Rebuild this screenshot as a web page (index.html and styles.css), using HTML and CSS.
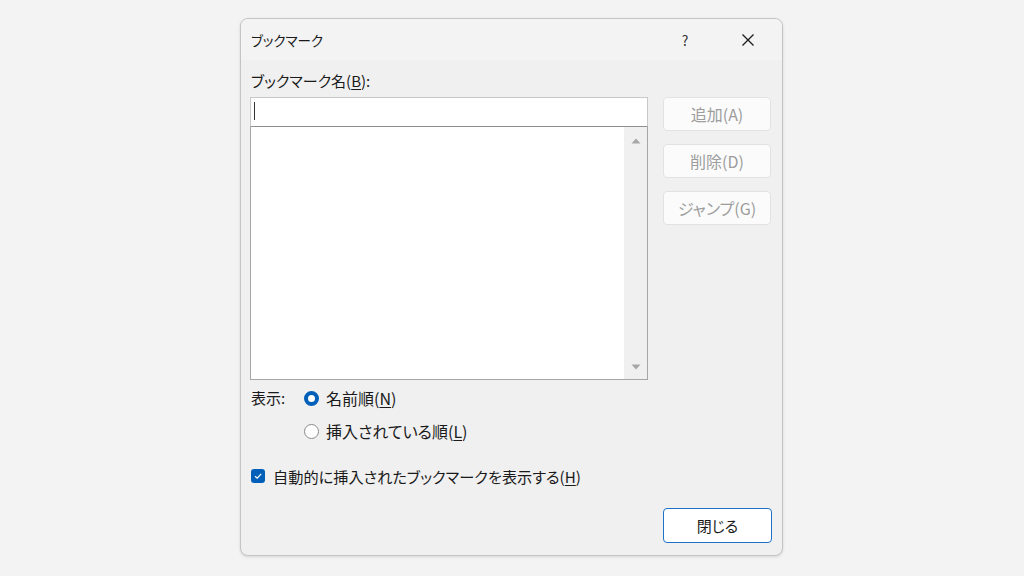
FILE: index.html
```html
<!DOCTYPE html>
<html lang="ja">
<head>
<meta charset="utf-8">
<link rel="stylesheet" href="styles.css">
</head>
<body>
<div class="stage">
  <div class="dialog">
    <div class="titlebar">
      <span class="title">ブックマーク</span>
      <span class="help">?</span>
      <span class="close">
        <svg width="14" height="14" viewBox="0 0 14 14"><path d="M1.5 1.5 L12.5 12.5 M12.5 1.5 L1.5 12.5" stroke="#1a1a1a" stroke-width="1.3" fill="none"/></svg>
      </span>
    </div>
    <div class="body">
      <div class="label">ブックマーク名(<u>B</u>):</div>
      <div class="main">
        <div class="leftcol">
          <div class="input"><span class="caret"></span></div>
          <div class="list">
            <div class="listarea"></div>
            <div class="scroll">
              <svg width="10" height="6" viewBox="0 0 10 6"><path d="M0.5 5.5 L5 0.5 L9.5 5.5 Z" fill="#a7a7a7"/></svg>
              <svg width="10" height="6" viewBox="0 0 10 6"><path d="M0.5 0.5 L5 5.5 L9.5 0.5 Z" fill="#a7a7a7"/></svg>
            </div>
          </div>
        </div>
        <div class="rightcol">
          <div class="btn disabled">追加(A)</div>
          <div class="btn disabled">削除(D)</div>
          <div class="btn disabled">ジャンプ(G)</div>
        </div>
      </div>
      <div class="display">
        <div class="displabel">表示:</div>
        <div class="radios">
          <div class="radio-row"><span class="radio checked"></span><span>名前順(<u>N</u>)</span></div>
          <div class="radio-row"><span class="radio"></span><span>挿入されている順(<u>L</u>)</span></div>
        </div>
      </div>
      <div class="check-row">
        <span class="checkbox"><svg width="10" height="10" viewBox="0 0 10 10"><path d="M2 5.2 L4.2 7.2 L8.2 2.8" stroke="#fff" stroke-width="1.2" fill="none"/></svg></span>
        <span>自動的に挿入されたブックマークを表示する(<u>H</u>)</span>
      </div>
      <div class="footer">
        <div class="btn primary">閉じる</div>
      </div>
    </div>
  </div>
</div>
</body>
</html>
```

FILE: styles.css
```css
* { box-sizing: border-box; }
html, body { margin: 0; padding: 0; }
body {
  background: #f3f3f3;
  font-family: "Noto Sans CJK JP", "Noto Sans", sans-serif;
  font-feature-settings: "palt";
  color: #1a1a1a;
  font-size: 15px;
}
.stage {
  width: 1024px;
  height: 576px;
  display: flex;
  align-items: flex-start;
  justify-content: flex-start;
  padding: 18px 0 0 240px;
}
.dialog {
  width: 543px;
  height: 538px;
  background: #f0f0f0;
  border: 1px solid #c4c4c4;
  border-radius: 8px;
  box-shadow: 0 1px 3px rgba(0,0,0,0.12);
  overflow: hidden;
  display: flex;
  flex-direction: column;
}
.titlebar {
  height: 41px;
  background: #f3f3f3;
  display: flex;
  align-items: center;
  padding-left: 10px;
  font-size: 13.5px;
}
.title { flex: 1; }
.help { width: 20px; text-align: center; margin-right: 46px; font-size: 14px; color: #333; }
.close { width: 14px; height: 14px; display: flex; margin-right: 27px; }
.body {
  flex: 1;
  padding: 0 10px 0 9px;
  display: flex;
  flex-direction: column;
}
.label { margin-top: 11px; line-height: 20px; height: 20px; padding-left: 1px; }
u { text-underline-offset: 2px; text-decoration-thickness: 1px; }
.main { display: flex; margin-top: 6px; gap: 14px; }
.leftcol { width: 398px; display: flex; flex-direction: column; }
.input {
  height: 30px;
  background: #fff;
  border: 1px solid #c9c9c9;
  border-bottom: 1px solid #8e8e8e;
  position: relative;
}
.caret {
  position: absolute;
  left: 3px;
  top: 4px;
  width: 1px;
  height: 18px;
  background: #333;
}
.list {
  height: 253px;
  background: #fff;
  border: 1px solid #a6a6a6;
  border-top: none;
  display: flex;
}
.listarea { flex: 1; }
.scroll {
  width: 23px;
  background: #f0f0f0;
  display: flex;
  flex-direction: column;
  justify-content: space-between;
  align-items: center;
  padding: 11px 0 9px;
}
.rightcol { display: flex; flex-direction: column; gap: 13px; padding-left: 1px; }
.btn {
  width: 108px;
  height: 34px;
  border: 1px solid #e2e2e2;
  border-radius: 4px;
  background: #fbfbfb;
  display: flex;
  align-items: center;
  justify-content: center;
  font-size: 16px;
}
.btn.disabled { color: #9d9d9d; }
.btn.primary {
  width: 109px;
  height: 35px;
  background: #fff;
  border: 1px solid #1f72c9;
  color: #1a1a1a;
  font-size: 15px;
}
.display { display: flex; margin-top: 7px; }
.displabel { width: 54px; line-height: 22px; padding-left: 1px; }
.radios { display: flex; flex-direction: column; gap: 11px; }
.radio-row { display: flex; align-items: center; gap: 7px; line-height: 22px; font-size: 16px; }
.radio {
  width: 15px;
  height: 15px;
  border-radius: 50%;
  border: 1px solid #8a8a8a;
  background: #fff;
}
.radio.checked {
  border: 4px solid #005fb8;
  background: #fff;
}
.check-row { display: flex; align-items: center; gap: 8px; margin-top: 23px; line-height: 22px; padding-left: 1px; font-size: 15.2px; }
.checkbox {
  width: 14px;
  height: 14px;
  border-radius: 3px;
  background: #005fb8;
  display: flex;
  align-items: center;
  justify-content: center;
}
.footer { display: flex; justify-content: flex-end; margin-top: auto; margin-bottom: 12px; }
```
